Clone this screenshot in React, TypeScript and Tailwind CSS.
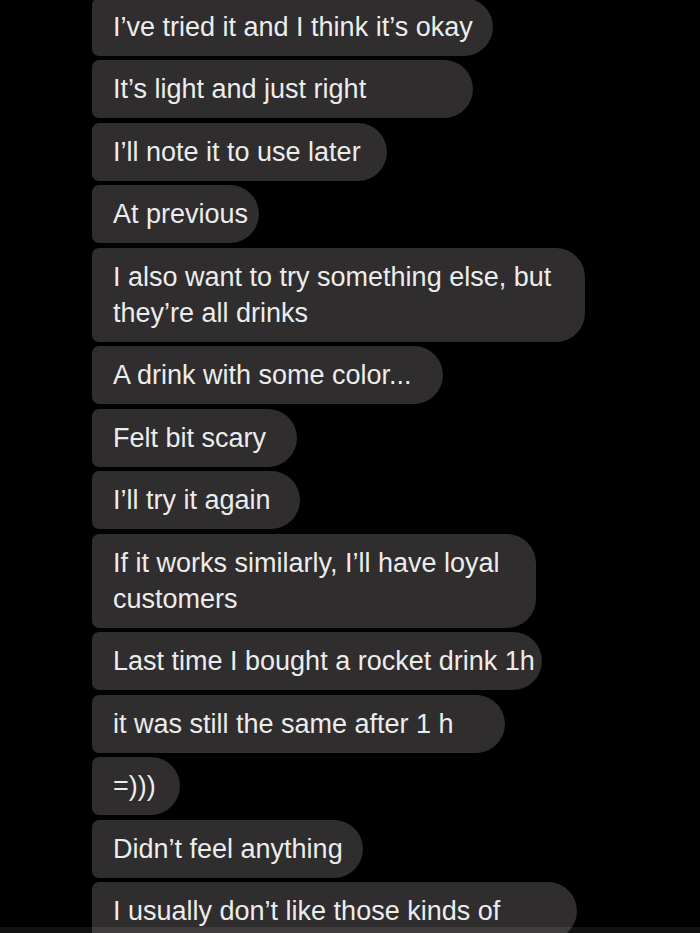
const messages: { text: string; width: string; wrap?: boolean }[] = [
  { text: 'I’ve tried it and I think it’s okay', width: 'w-[401px]' },
  { text: 'It’s light and just right', width: 'w-[381px]' },
  { text: 'I’ll note it to use later', width: 'w-[295px]' },
  { text: 'At previous', width: 'w-[167px]' },
  { text: 'I also want to try something else, but they’re all drinks', width: 'w-[493px]', wrap: true },
  { text: 'A drink with some color...', width: 'w-[351px]' },
  { text: 'Felt bit scary', width: 'w-[205px]' },
  { text: 'I’ll try it again', width: 'w-[208px]' },
  { text: 'If it works similarly, I’ll have loyal customers', width: 'w-[444px]', wrap: true },
  { text: 'Last time I bought a rocket drink 1h', width: 'w-[450px]' },
  { text: 'it was still the same after 1 h', width: 'w-[413px]' },
  { text: '=)))', width: 'w-[88px]' },
  { text: 'Didn’t feel anything', width: 'w-[271px]' },
  { text: 'I usually don’t like those kinds of', width: 'w-[485px]' },
];

function Bubble({ text, width, wrap }: { text: string; width: string; wrap?: boolean }) {
  return (
    <div
      className={`${width} ${wrap ? '' : 'whitespace-nowrap'} shrink-0 bg-[#2f2d2e] text-[#ececec] rounded-l-[7px] rounded-r-[29px] pl-[21px] pr-[8px] py-[11px] text-[27px] leading-[36px]`}
    >
      {text}
    </div>
  );
}

export default function App() {
  return (
    <div className="relative w-[700px] h-[933px] overflow-hidden bg-black font-['Liberation_Sans',Arial,sans-serif]">
      <div className="flex flex-col gap-[4.5px] pl-[92px] -mt-[2.5px]">
        {messages.map((m, i) => (
          <Bubble key={i} text={m.text} width={m.width} wrap={m.wrap} />
        ))}
      </div>
      {/* faint bar at the very bottom of the screenshot */}
      <div className="absolute left-0 right-0 bottom-0 h-[6px] bg-[#ffffff]/[0.07]" />
    </div>
  );
}
